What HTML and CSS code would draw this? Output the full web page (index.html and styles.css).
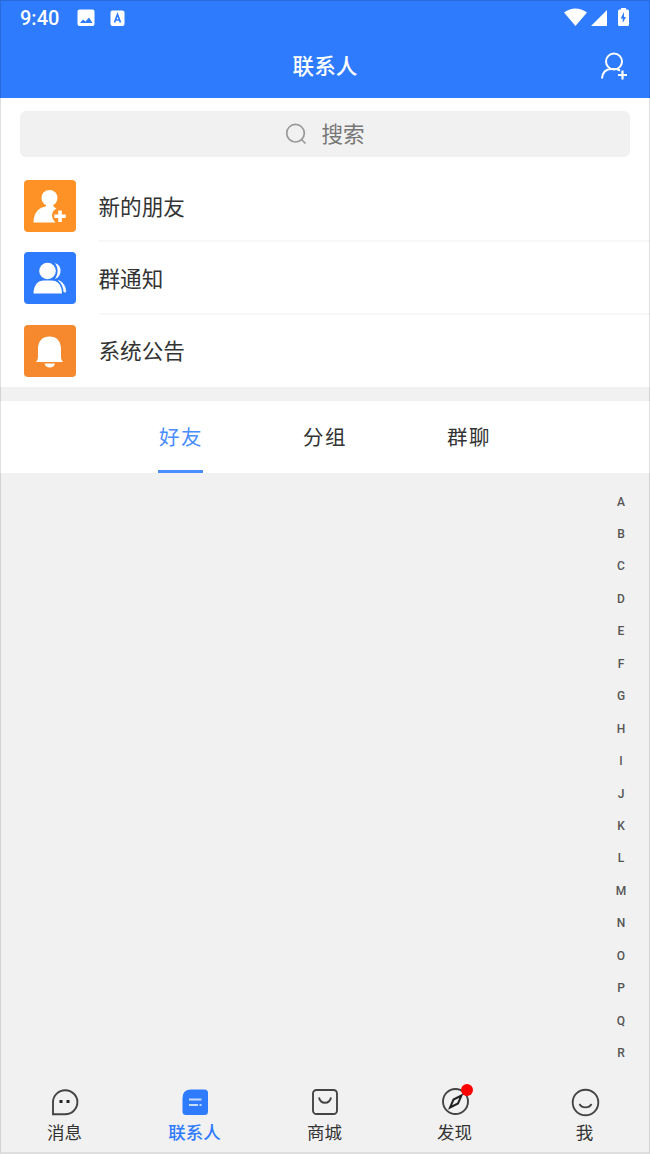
FILE: index.html
```
<!DOCTYPE html>
<html lang="zh-CN">
	<head>
		<meta charset="utf-8" />
		<title>联系人</title>
		<meta name="viewport" content="width=device-width, initial-scale=1" />
		<link rel="stylesheet" href="styles.css">
	</head>
	<body>
		<header class="header">
			<div class="status">
				<span class="time">9:40</span>
				<svg class="status-image" width="18" height="18" viewBox="0 0 18 18">
					<rect x="0.5" y="0.5" width="17" height="16.5" rx="2" fill="#fff" />
					<path d="M3 14l3-3.500 2.500 2 3.500-4 3.500 5.500z" fill="#2e7bfd" />
				</svg>
				<svg class="status-input" width="15" height="17" viewBox="0 0 15 17">
					<rect x="0.5" y="0.5" width="14" height="15.5" rx="2" fill="#fff" />
					<path d="M4.500 12.500L7.500 4.500l3 8M5.500 10h4" fill="none" stroke="#2e7bfd" stroke-width="1.7" />
				</svg>
				<svg class="signals" width="66" height="20" viewBox="0 0 66 20">
					<path d="M0 4.500Q11.500-3.500 23 4.500L11.500 18z" fill="#fff" />
					<path d="M43 2v16H27z" fill="#fff" />
					<path d="M57 1.500V0h5v1.500h1.500q1.500 0 1.500 1.500v13.500q0 1.500-1.500 1.500h-8q-1.500 0-1.500-1.500V3q0-1.500 1.500-1.500z" fill="#fff" />
					<path d="M60 4l-3.300 6.500h2V15l3.300-6h-2z" fill="#2e7bfd" />
				</svg>
			</div>
			<div class="titlebar">
				<h1>联系人</h1>
				<svg class="add" width="30" height="30" viewBox="0 0 30 30" fill="none" stroke="#fff" stroke-width="2">
					<circle cx="15" cy="10.5" r="8" />
					<path d="M3 27.500C3.500 21.500 7 18 12.500 18h5.500l3 1.500" />
					<path d="M23.500 19.500v9M19 24h9" stroke-width="2.2" />
				</svg>
			</div>
		</header>

		<div class="search">
			<div class="field">
				<svg width="22" height="22" viewBox="0 0 22 22" fill="none" stroke="#999" stroke-width="1.7">
					<circle cx="10.5" cy="10.2" r="8.8" />
					<path d="M16.500 16.500l4 4" />
				</svg>
				<span>搜索</span>
			</div>
		</div>

		<ul class="entries">
			<li>
				<svg class="tile orange" viewBox="0 0 52 52" fill="#fff">
					<circle cx="25.5" cy="18" r="8" />
					<path d="M22.500 24h6.500c0 2 .5 3 3.500 4.500-5.500 3-6 9-1 14H9.500C9.500 34 14 28 20 27c2-.5 2.500-1.500 2.500-3z" />
					<path d="M34.300 30.500h3.500v4h4V38h-4v4h-3.500v-4h-4v-3.500h4z" />
				</svg>
				<span>新的朋友</span>
			</li>
			<li>
				<svg class="tile blue" viewBox="0 0 52 52" fill="#fff">
					<circle cx="23.5" cy="19" r="8.3" />
					<path d="M9.500 41.500C9.500 33 14 28.500 20 28.500h7.500c6 0 10.500 4.500 10.500 13z" />
					<path d="M31 11c7.500 2 7.500 13.500 0 16 3.500-5 3.500-11 0-16z" />
					<path d="M34.500 28.500c5 2 7 6 7.300 11.500H40c-.5-5-2.500-9-5.500-11.500z" stroke="#fff" stroke-width="0.7" />
				</svg>
				<span>群通知</span>
			</li>
			<li>
				<svg class="tile amber" viewBox="0 0 52 52" fill="#fff">
					<path d="M12 37c1.800-2 2-3.500 2-7v-6c0-8 4.500-12.500 11.500-12.500S37 16 37 24v6c0 3.500.2 5 2 7z" />
					<path d="M20.500 38.500h10.500q-1 4-5.200 4t-5.300-4z" />
				</svg>
				<span>系统公告</span>
			</li>
		</ul>

		<nav class="tabs">
			<a class="active">好友</a>
			<a>分组</a>
			<a>群聊</a>
		</nav>

		<main class="friends">
			<ol class="letters">
				<li>A</li>
				<li>B</li>
				<li>C</li>
				<li>D</li>
				<li>E</li>
				<li>F</li>
				<li>G</li>
				<li>H</li>
				<li>I</li>
				<li>J</li>
				<li>K</li>
				<li>L</li>
				<li>M</li>
				<li>N</li>
				<li>O</li>
				<li>P</li>
				<li>Q</li>
				<li>R</li>
			</ol>
		</main>

		<footer class="tabbar">
			<a>
				<svg viewBox="0 0 30 30">
					<path d="M3 27.200V15A12.200 12 0 1 1 15.200 27.200z" />
					<path d="M9.500 14.500h3M16.500 14.500h3" stroke="#222" stroke-width="3" />
				</svg>
				<span>消息</span>
			</a>
			<a class="active">
				<svg viewBox="0 0 30 30">
					<path d="M11 2.500h13.500q3.500 0 3.500 3.500v18.500q0 3.500-3.500 3.500H6q-3.500 0-3.500-3.500V11q0-8.500 8.500-8.500z" fill="#2e7bfd" stroke="none" />
					<path d="M9 12.500h12.500M9 18h9M19.500 18h2" stroke="#c3dcff" stroke-width="1.8" />
				</svg>
				<span>联系人</span>
			</a>
			<a>
				<svg viewBox="0 0 30 30">
					<rect x="3" y="3" width="24" height="24" rx="3.5" />
					<path d="M9 10.500c1.500 7 10.500 7 12 0" />
				</svg>
				<span>商城</span>
			</a>
			<a>
				<svg viewBox="0 0 30 30">
					<circle cx="15.5" cy="14.5" r="12.5" />
					<path d="M21.500 8.500l-8 4-3.500 8 8-4z" stroke="#222" stroke-width="2" />
				</svg>
				<i class="dot"></i>
				<span>发现</span>
			</a>
			<a>
				<svg viewBox="0 0 30 30">
					<circle cx="15.5" cy="15.5" r="12.8" />
					<path d="M9.500 17c2.500 4.500 9.500 4.500 12 0" />
				</svg>
				<span>我</span>
			</a>
		</footer>
	</body>
</html>
```
FILE: styles.css
```
* {
	box-sizing: border-box;
}

body {
	background: #f1f1f1;
	color: #333333;
	display: flex;
	flex-direction: column;
	font-family: Roboto, "Noto Sans CJK SC", sans-serif;
	height: 1154px;
	margin: 0;
	overflow: hidden;
	position: relative;
}

/* thin frame over the whole screen */
body:after {
	border: 1px solid rgba(0, 0, 0, 0.12);
	border-bottom: 2px solid rgba(0, 0, 0, 0.08);
	content: "";
	inset: 0;
	pointer-events: none;
	position: absolute;
}

ul,
ol {
	list-style: none;
	margin: 0;
	padding: 0;
}

svg {
	display: block;
	flex: none;
}

.header {
	background: #2e7bfd;
	color: #ffffff;
	flex: none;
	height: 98px;
}

.status {
	align-items: center;
	display: flex;
	height: 36px;
	padding: 0 20px;
}

.time {
	font-size: 20px;
	font-weight: 500;
	width: 57px;
}

.status-input {
	margin-left: 15px;
}

.signals {
	margin-left: auto;
}

.titlebar {
	align-items: center;
	display: grid;
	grid-template-columns: 1fr auto 1fr;
	height: 60px;
	padding: 0 21px;
}

.titlebar h1 {
	font-size: 21.6px;
	font-weight: 500;
	grid-column: 2;
	margin: 0;
	padding-bottom: 3px;
}

.add {
	justify-self: end;
}

.search {
	background: #ffffff;
	flex: none;
	padding: 13px 20px;
}

.field {
	align-items: center;
	background: #f1f1f1;
	border-radius: 6px;
	color: #777777;
	display: flex;
	font-size: 21.6px;
	gap: 14px;
	height: 46px;
	justify-content: center;
}

.field span {
	padding-bottom: 3px;
}

.entries {
	background: #ffffff;
	border-bottom: 14px solid #f1f1f1;
	flex: none;
	height: 231px;
}

.entries li {
	align-items: center;
	display: flex;
	font-size: 21.6px;
	height: 72.3px;
	padding-left: 23.5px;
}

.entries span {
	align-items: center;
	border-bottom: 2px solid #f7f7f7;
	display: flex;
	flex: 1;
	height: 100%;
	margin-left: 23px;
}

.entries li:last-child span {
	border-color: #ffffff;
}

.tile {
	border-radius: 4px;
	height: 52px;
	width: 52px;
}

.orange {
	background: #ff9226;
}

.blue {
	background: #2e7bfd;
}

.amber {
	background: #f6882e;
}

.tabs {
	background: #ffffff;
	display: flex;
	flex: none;
	gap: 99px;
	height: 72px;
	justify-content: center;
	padding-right: 1px;
}

.tabs a {
	border-bottom: 3px solid transparent;
	font-size: 20.5px;
	letter-spacing: 1.6px;
	line-height: 74px;
	padding-left: 1px;
	text-align: center;
	white-space: nowrap;
	width: 45px;
}

.tabs .active {
	border-color: #4a8dff;
	color: #4a8dff;
}

.friends {
	flex: 1;
	padding-top: 12.5px;
}

.letters {
	color: #555555;
	font-size: 12px;
	font-weight: 500;
	line-height: 32.45px;
	margin-left: auto;
	margin-right: 14px;
	text-align: center;
	width: 30px;
}

.tabbar {
	display: flex;
	flex: none;
	height: 70px;
}

.tabbar a {
	align-items: center;
	display: flex;
	flex: 1;
	flex-direction: column;
	font-size: 17.5px;
	padding-top: 3px;
	position: relative;
}

.tabbar svg {
	fill: none;
	height: 30px;
	stroke: #444444;
	stroke-width: 1.9;
	width: 30px;
}

.tabbar span {
	line-height: 24px;
	margin-right: 1px;
	margin-top: 4px;
}

.tabbar .active {
	color: #2e7bfd;
	font-weight: 500;
}

.dot {
	background: #ff0000;
	border-radius: 50%;
	height: 12px;
	left: 71px;
	position: absolute;
	top: 0;
	width: 12px;
}
```
